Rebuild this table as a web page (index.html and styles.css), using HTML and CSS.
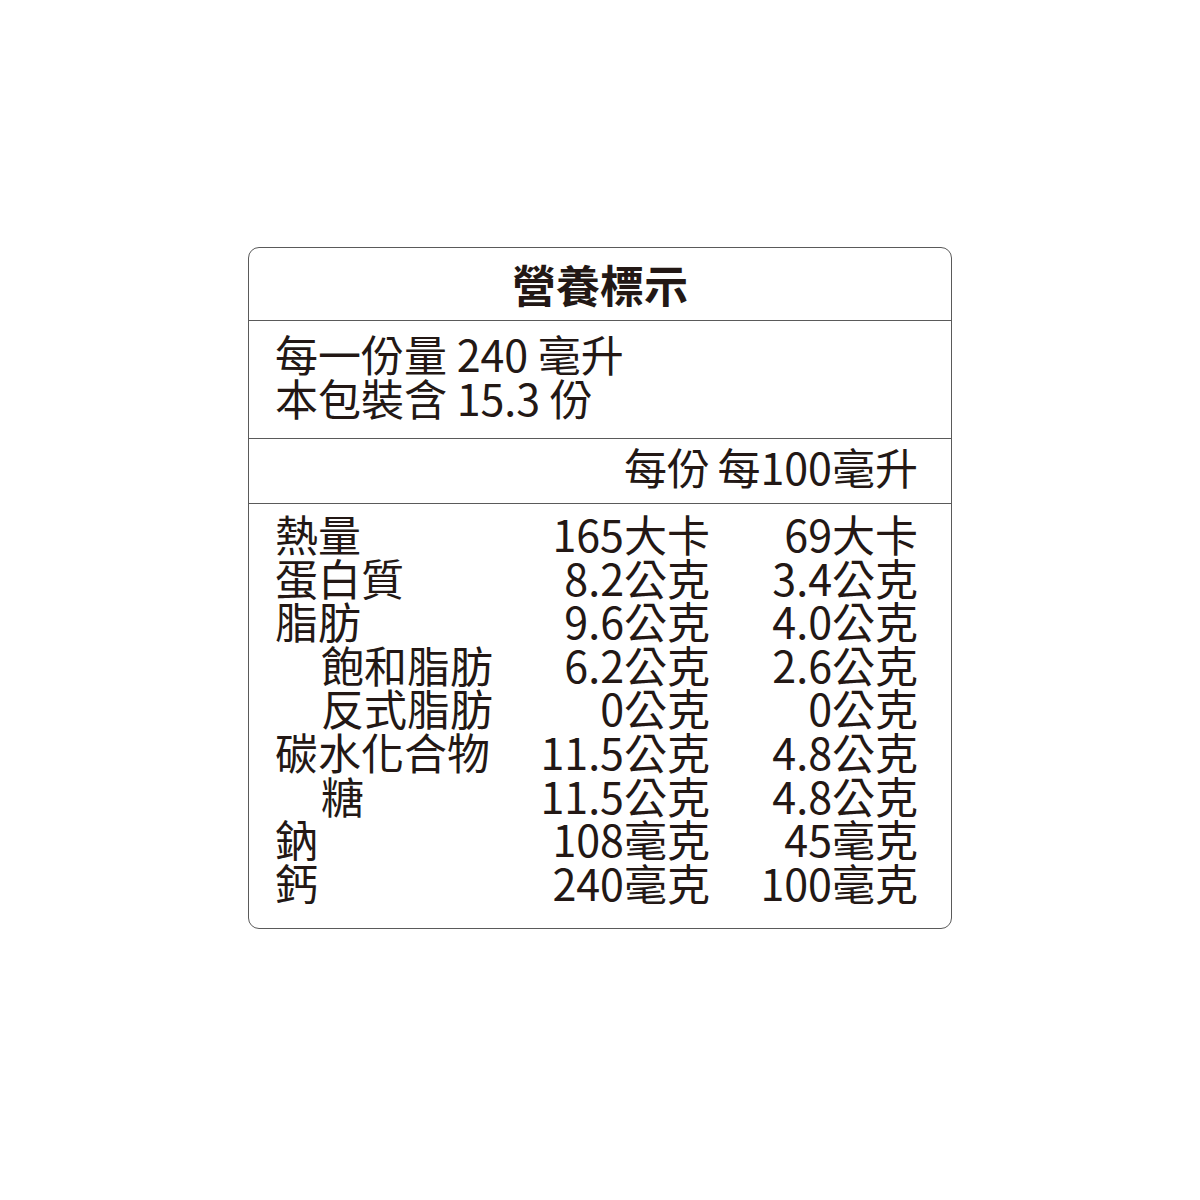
FILE: index.html
```html
<!DOCTYPE html>
<html lang="zh-Hant">
<head>
<meta charset="utf-8">
<title>營養標示</title>
<link rel="stylesheet" href="styles.css">
</head>
<body>
<div class="page">
  <div class="label">
    <div class="title">營養標示</div>
    <div class="serving">
      <div>每一份量 240 毫升</div>
      <div>本包裝含 15.3 份</div>
    </div>
    <div class="heads">
      <div class="c1"></div>
      <div class="c2">每份</div>
      <div class="c3">每100毫升</div>
    </div>
    <div class="rows">
      <div class="c1">熱量</div><div class="c2">165大卡</div><div class="c3">69大卡</div>
      <div class="c1">蛋白質</div><div class="c2">8.2公克</div><div class="c3">3.4公克</div>
      <div class="c1">脂肪</div><div class="c2">9.6公克</div><div class="c3">4.0公克</div>
      <div class="c1 sub">飽和脂肪</div><div class="c2">6.2公克</div><div class="c3">2.6公克</div>
      <div class="c1 sub">反式脂肪</div><div class="c2">0公克</div><div class="c3">0公克</div>
      <div class="c1">碳水化合物</div><div class="c2">11.5公克</div><div class="c3">4.8公克</div>
      <div class="c1 sub">糖</div><div class="c2">11.5公克</div><div class="c3">4.8公克</div>
      <div class="c1">鈉</div><div class="c2">108毫克</div><div class="c3">45毫克</div>
      <div class="c1">鈣</div><div class="c2">240毫克</div><div class="c3">100毫克</div>
    </div>
  </div>
</div>
</body>
</html>
```

FILE: styles.css
```css
html, body {
  margin: 0;
  padding: 0;
  background: #ffffff;
}

.page {
  width: 1200px;
  height: 1200px;
  padding-top: 247px;
  box-sizing: border-box;
}

.label {
  width: 704px;
  margin: 0 auto;
  box-sizing: border-box;
  border: 1px solid #5a5a5a;
  border-radius: 11px;
  font-family: "Noto Sans CJK TC", "Noto Sans", sans-serif;
  color: #231815;
  font-size: 43px;
  line-height: 44px;
}

.title {
  font-size: 44px;
  font-weight: 700;
  text-align: center;
  padding: 14px 0 14px;
  border-bottom: 1px solid #5a5a5a;
}

.serving {
  padding: 10px 26px 19px;
  border-bottom: 1px solid #5a5a5a;
}

.heads,
.rows {
  display: grid;
  grid-template-columns: 1fr 200px 208px;
  padding-left: 26px;
  padding-right: 33px;
}

.heads {
  padding-top: 5px;
  padding-bottom: 15px;
  border-bottom: 1px solid #5a5a5a;
}

.rows {
  line-height: 43.6px;
  padding-top: 8px;
  padding-bottom: 24px;
}

.c2,
.c3 {
  text-align: right;
  white-space: nowrap;
}

.c1 {
  white-space: nowrap;
}

.sub {
  padding-left: 46px;
}
```
